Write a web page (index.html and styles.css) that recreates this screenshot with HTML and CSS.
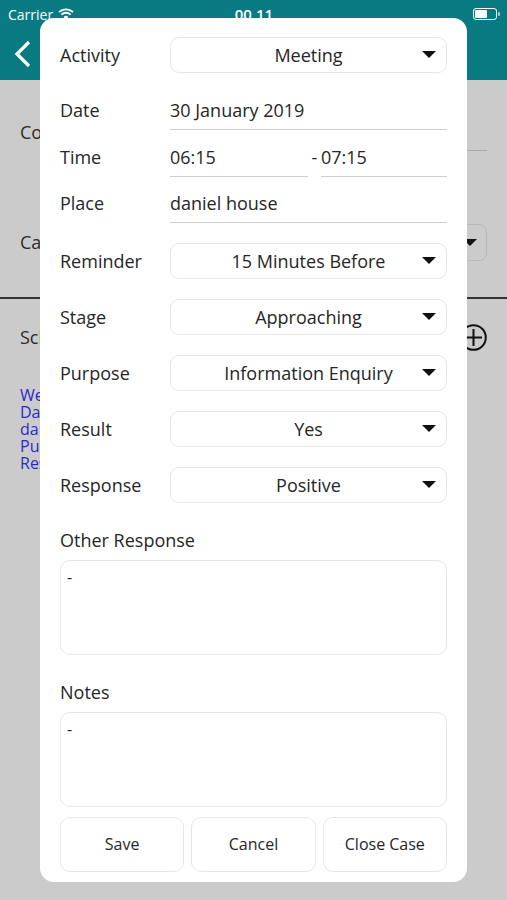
FILE: index.html
```html
<!DOCTYPE html>
<html lang="en">
<head>
    <meta charset="UTF-8">
    <meta name="viewport" content="width=device-width, initial-scale=1.0">
    <title>Activity</title>
    <link rel="stylesheet" href="styles.css">
</head>
<body>
<div class="app">

    <!-- Top Bar -->
    <header class="topbar">
        <div class="status">
            <div class="carrier">
                Carrier
                <svg class="wifi" width="16" height="12" viewBox="0 0 16 12">
                    <path d="M1 4.2 A10 10 0 0 1 15 4.2" fill="none" stroke="#fff" stroke-width="1.8"/>
                    <path d="M3.4 6.6 A6.6 6.6 0 0 1 12.6 6.6" fill="none" stroke="#fff" stroke-width="1.8"/>
                    <path d="M8 11.5 L5.6 9 A3.4 3.4 0 0 1 10.4 9 Z" fill="#fff"/>
                </svg>
            </div>
            <div class="clock">00.11</div>
            <div class="battery"><span class="battery-level"></span></div>
        </div>
        <div class="nav">
            <svg width="20" height="28" viewBox="0 0 20 28">
                <path d="M16 2 L4 14 L16 26" fill="none" stroke="#fff" stroke-width="3.2"/>
            </svg>
        </div>
    </header>

    <!-- Page behind the dialog -->
    <main class="page">
        <div class="bg-row contact">
            <span>Contact</span>
            <span class="bg-line"></span>
        </div>
        <div class="bg-row case">
            <span>Case</span>
            <div class="bg-select"><span class="caret"></span></div>
        </div>
        <hr class="divider">
        <div class="bg-row schedule">
            <span>Schedule</span>
            <svg width="27" height="27" viewBox="0 0 27 27">
                <circle cx="13.5" cy="13.5" r="12.3" fill="none" stroke="#111" stroke-width="2"/>
                <path d="M13.5 5 V22 M5 13.5 H22" stroke="#111" stroke-width="2"/>
            </svg>
        </div>
        <div class="bg-list">
            <div>Week 5</div>
            <div>Date 30 January 2019</div>
            <div>daniel house</div>
            <div>Purpose Information Enquiry</div>
            <div>Result Yes</div>
        </div>
    </main>

    <!-- Activity Dialog -->
    <div class="modal">
        <div class="row">
            <span class="label">Activity</span>
            <div class="select"><span class="value">Meeting</span><span class="caret"></span></div>
        </div>
        <div class="row date">
            <span class="label">Date</span>
            <div class="line-field">30 January 2019</div>
        </div>
        <div class="row time">
            <span class="label">Time</span>
            <div class="line-field start">06:15</div>
            <span class="dash">-</span>
            <div class="line-field">07:15</div>
        </div>
        <div class="row place">
            <span class="label">Place</span>
            <div class="line-field">daniel house</div>
        </div>
        <div class="row spaced">
            <span class="label">Reminder</span>
            <div class="select"><span class="value">15 Minutes Before</span><span class="caret"></span></div>
        </div>
        <div class="row spaced">
            <span class="label">Stage</span>
            <div class="select"><span class="value">Approaching</span><span class="caret"></span></div>
        </div>
        <div class="row spaced">
            <span class="label">Purpose</span>
            <div class="select"><span class="value">Information Enquiry</span><span class="caret"></span></div>
        </div>
        <div class="row spaced">
            <span class="label">Result</span>
            <div class="select"><span class="value">Yes</span><span class="caret"></span></div>
        </div>
        <div class="row spaced">
            <span class="label">Response</span>
            <div class="select"><span class="value">Positive</span><span class="caret"></span></div>
        </div>

        <div class="block-label">Other Response</div>
        <div class="text-box">-</div>

        <div class="block-label">Notes</div>
        <div class="text-box">-</div>

        <div class="actions">
            <button class="btn">Save</button>
            <button class="btn">Cancel</button>
            <button class="btn">Close Case</button>
        </div>
    </div>

</div>
</body>
</html>
```

FILE: styles.css
```css
/* Reset */
* {
    margin: 0;
    padding: 0;
    box-sizing: border-box;
}

body {
    font-family: "Open Sans", "Liberation Sans", sans-serif;
    background: #cbcbcb;
    color: #262626;
}

.app {
    position: relative;
    width: 507px;
    height: 900px;
    overflow: hidden;
    background: #cbcbcb;
}

/* Top Bar */
.topbar {
    height: 80px;
    background: #0a7a82;
    color: #fff;
}

.status {
    height: 28px;
    display: flex;
    align-items: center;
    justify-content: space-between;
    padding: 0 7px 0 8px;
    font-size: 14px;
}

.carrier {
    display: flex;
    align-items: center;
    gap: 5px;
    width: 120px;
}

.clock {
    font-size: 15px;
    font-weight: 600;
}

.battery {
    width: 120px;
    display: flex;
    justify-content: flex-end;
}

.battery::after {
    content: "";
    width: 2px;
    height: 4px;
    background: #fff;
    border-radius: 0 1px 1px 0;
    margin: 4px 0 0 1px;
    opacity: 0.6;
}

.battery-level {
    width: 24px;
    height: 12px;
    border: 1px solid #fff;
    border-radius: 3px;
    padding: 1px;
    display: flex;
}

.battery-level::before {
    content: "";
    width: 60%;
    background: #fff;
    border-radius: 1px;
}

.nav {
    height: 52px;
    display: flex;
    align-items: center;
    padding-left: 13px;
}

/* Page behind */
.page {
    padding: 0 20px;
    font-size: 18px;
    color: #2c2c2c;
}

.bg-row {
    display: flex;
    align-items: center;
    justify-content: space-between;
    height: 40px;
}

.contact {
    margin-top: 32px;
}

.bg-line {
    width: 200px;
    align-self: flex-end;
    border-bottom: 1px solid #aaa;
    margin-bottom: 1px;
}

.case {
    margin-top: 70px;
}

.bg-select {
    width: 200px;
    height: 37px;
    border: 1px solid #b8b8b8;
    border-radius: 8px;
    display: flex;
    align-items: center;
    justify-content: flex-end;
    padding-right: 9px;
}

.divider {
    border: none;
    border-top: 2px solid #333;
    margin: 35px -20px 0;
}

.schedule {
    margin-top: 18px;
}

.bg-list {
    margin-top: 30px;
    font-size: 16px;
    line-height: 17px;
    color: #2a2ac8;
}

/* Dialog */
.modal {
    position: absolute;
    top: 18px;
    left: 40px;
    width: 427px;
    height: 864px;
    padding: 19px 20px 10px;
    background: #fff;
    border-radius: 14px;
    display: flex;
    flex-direction: column;
    font-size: 18px;
}

.row {
    display: flex;
    align-items: center;
}

.label {
    width: 110px;
    flex-shrink: 0;
}

.select {
    flex: 1;
    height: 36px;
    border: 1px solid #e6e6e6;
    border-radius: 9px;
    display: grid;
    grid-template-columns: 24px 1fr 24px;
    align-items: center;
    padding-bottom: 1px;
}

.value {
    grid-column: 2;
    text-align: center;
}

.caret {
    width: 0;
    height: 0;
    border-left: 7px solid transparent;
    border-right: 7px solid transparent;
    border-top: 7px solid #111;
}

.line-field {
    flex: 1;
    height: 37px;
    border-bottom: 1px solid #cfcfcf;
    display: flex;
    align-items: center;
    padding-bottom: 3px;
}

.line-field.start {
    flex: none;
    width: 138px;
}

.dash {
    width: 13px;
    text-align: center;
    padding-bottom: 3px;
}

.row.date .label,
.row.time .label,
.row.place .label {
    padding-bottom: 3px;
}

.date {
    margin-top: 20px;
}

.time {
    margin-top: 10px;
}

.place {
    margin-top: 9px;
}

.spaced {
    margin-top: 20px;
}

.block-label {
    margin-top: 25px;
    line-height: 24px;
}

.text-box {
    margin-top: 8px;
    height: 95px;
    border: 1px solid #e6e6e6;
    border-radius: 10px;
    padding: 4px 6px;
    font-size: 16px;
    line-height: 24px;
}

.actions {
    margin-top: 10px;
    display: flex;
    gap: 7px;
}

.btn {
    flex: 1;
    height: 55px;
    background: #fff;
    border: 1px solid #e6e6e6;
    border-radius: 10px;
    font-family: inherit;
    font-size: 16px;
    color: #262626;
    padding-bottom: 2px;
}
```
